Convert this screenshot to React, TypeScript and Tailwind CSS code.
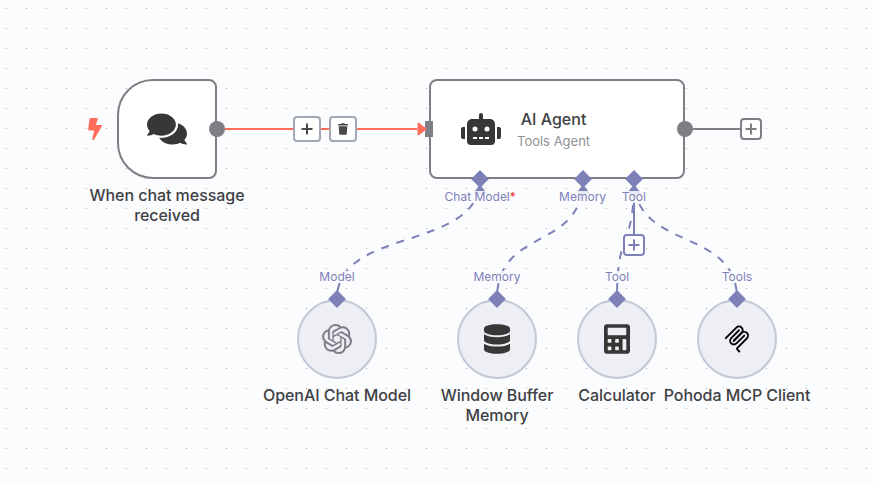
import React from "react";
import { FaBolt, FaCalculator, FaComments, FaDatabase, FaRobot, FaTrash } from "react-icons/fa";
import { SiOpenai } from "react-icons/si";

function Plus() {
  return (
    <svg viewBox="0 0 12 12" className="size-3" stroke="currentColor" strokeWidth="2" fill="none">
      <path d="M6 0.5v11M0.5 6h11" />
    </svg>
  );
}

function McpIcon() {
  return (
    <svg viewBox="0 0 180 180" className="size-7 text-black" fill="none" stroke="currentColor" strokeWidth="12" strokeLinecap="round">
      <path d="M18 84.85L85.88 16.97C95.25 7.6 110.45 7.6 119.82 16.97C129.2 26.34 129.2 41.54 119.82 50.91L68.56 102.18" />
      <path d="M69.27 101.47L119.82 50.91C129.2 41.54 144.39 41.54 153.77 50.91L154.12 51.27C163.49 60.64 163.49 75.83 154.12 85.21L92.72 146.6C89.6 149.72 89.6 154.79 92.72 157.91L105.33 170.52" />
      <path d="M102.85 33.94L52.65 84.15C43.28 93.52 43.28 108.71 52.65 118.09C62.02 127.46 77.22 127.46 86.59 118.09L136.79 67.88" />
    </svg>
  );
}

/* Horizontal positions of the agent's lower ports and the sub-nodes they connect to. */
const edges = [
  { from: 480, to: 337 },
  { from: 583, to: 497 },
  { from: 634, to: 617 },
  { from: 634, to: 737 },
];

function Background() {
  return (
    <svg className="absolute inset-0" width="873" height="486" fill="none" strokeWidth="2">
      <defs>
        <pattern id="grid" x="6" y="8" width="20" height="20" patternUnits="userSpaceOnUse">
          <rect width="1" height="1" fill="#a5a6a9" />
        </pattern>
      </defs>
      <rect width="873" height="486" fill="url(#grid)" />
      <path d="M634 180V235" stroke="#7d81b8" />
      {edges.map((e) => (
        <g key={e.to} stroke="#7d81b8">
          <path
            d={`M${e.to} 299C${e.to} 226 ${e.from} 252 ${e.from} 179`}
            strokeDasharray="8 8"
            strokeDashoffset="8"
          />
          <path d={`M${e.from - 5.5} 193L${e.from} 186L${e.from + 5.5} 193Z`} fill="#7d81b8" strokeLinejoin="round" />
        </g>
      ))}
    </svg>
  );
}

function Diamond() {
  return <div className="size-3 shrink-0 rotate-45 scale-105 bg-[#7d81b8]" />;
}

function PortLabel({ children }: { children: React.ReactNode }) {
  return (
    <span className="bg-[#fbfcfe]/85 text-xs leading-3 whitespace-nowrap text-[#7d81b8]">{children}</span>
  );
}

function AgentPort({ className, children }: { className?: string; children: React.ReactNode }) {
  return (
    <div className={`flex flex-col items-center gap-1.5 ${className ?? ""}`}>
      <Diamond />
      <PortLabel>{children}</PortLabel>
    </div>
  );
}

function SubNode({ port, label, className, children }: { port: string; label: string; className: string; children: React.ReactNode }) {
  return (
    <div className={`flex flex-col items-center ${className}`}>
      <PortLabel>{port}</PortLabel>
      <div className="z-10 mt-2.5 -mb-1.5">
        <Diamond />
      </div>
      <div className="flex size-20 items-center justify-center rounded-full border-2 border-[#c3c8d6] bg-[#eeeff5] text-[#373737]">
        {children}
      </div>
      <div className="mt-1.5 text-center text-base leading-5 font-medium tracking-[-0.05px] whitespace-pre">{label}</div>
    </div>
  );
}

export default function App() {
  return (
    <main className="relative h-[486px] w-[873px] overflow-hidden bg-[#fbfcfe] font-['Inter',sans-serif] text-[#404144]">
      <Background />

      <div className="relative flex h-[192px] items-start pt-[79px] pl-[87px]">
        <div className="flex h-[100px] w-[30px] items-center pl-px">
          <FaBolt className="h-[22px] w-[14px] text-[#ff6d5a]" />
        </div>

        <section className="flex w-[100px] flex-col items-center">
          <div className="flex size-[100px] items-center justify-center rounded-l-[36px] rounded-r-lg border-2 border-[#7d7f85] bg-white text-[#373737]">
            <FaComments className="h-9 w-10" />
          </div>
          <div className="mt-1.5 text-center text-base leading-5 font-medium tracking-[-0.05px] whitespace-pre">
            {"When chat message\nreceived"}
          </div>
        </section>

        <div className="z-10 -mr-1 -ml-2 flex h-[100px] w-56 items-center">
          <div className="size-4 rounded-full bg-[#7d7f85]" />
          <div className="flex h-0.5 flex-1 items-center justify-center gap-2 bg-[#ff6d5a] pl-2 text-[#48494d]">
            <button className="flex h-[26px] w-7 items-center justify-center rounded border-2 border-[#a2a7b6] bg-white">
              <Plus />
            </button>
            <button className="flex h-[26px] w-7 items-center justify-center rounded border-2 border-[#a2a7b6] bg-white">
              <FaTrash className="h-3 w-2.5" />
            </button>
          </div>
          <svg className="z-10 -mr-0.5" width="10" height="16">
            <path d="M1.5 2.7L8.3 8L1.5 13.3Z" fill="#ff6d5a" stroke="#ff6d5a" strokeWidth="2" strokeLinejoin="round" />
          </svg>
          <div className="h-4 w-2 bg-[#7d7f85]" />
        </div>

        <section className="flex w-64 flex-col">
          <div className="flex h-[100px] items-center gap-4 rounded-lg border-2 border-[#7d7f85] bg-white pl-[30px]">
            <FaRobot className="h-8 w-10 text-[#373737]" />
            <div className="text-center">
              <div className="text-base leading-5 font-medium">AI Agent</div>
              <div className="mt-1 text-[13px] leading-4 text-[#909298]">Tools Agent</div>
            </div>
          </div>
          <div className="-mt-1.5 grid grid-cols-4 px-[25.6px]">
            <AgentPort>
              Chat Model<span className="text-[#f02c3c]">*</span>
            </AgentPort>
            <AgentPort className="col-start-3">Memory</AgentPort>
            <AgentPort>Tool</AgentPort>
          </div>
        </section>

        <div className="z-10 -ml-2 flex h-[100px] items-center">
          <div className="size-4 rounded-full bg-[#7d7f85]" />
          <div className="h-0.5 w-[47px] bg-[#7d7f85]" />
          <button className="flex size-[22px] items-center justify-center rounded border-2 border-[#7d7f85] bg-white text-[#7d7f85]">
            <Plus />
          </button>
        </div>
      </div>

      <div className="relative flex h-[79px] pt-[42px] pl-[623px]">
        <button className="flex size-[22px] items-center justify-center rounded border-2 border-[#7d81b8] bg-white text-[#7d81b8]">
          <Plus />
        </button>
      </div>

      <div className="relative flex pl-[257px]">
        <SubNode className="w-40" port="Model" label="OpenAI Chat Model">
          <SiOpenai className="size-[30px] text-[#7d7d87]" />
        </SubNode>
        <SubNode className="w-40" port="Memory" label={"Window Buffer\nMemory"}>
          <FaDatabase className="h-[30px] w-[26px]" />
        </SubNode>
        <SubNode className="w-20" port="Tool" label="Calculator">
          <FaCalculator className="h-[30px] w-[26px]" />
        </SubNode>
        <SubNode className="w-40" port="Tools" label="Pohoda MCP Client">
          <McpIcon />
        </SubNode>
      </div>
    </main>
  );
}
